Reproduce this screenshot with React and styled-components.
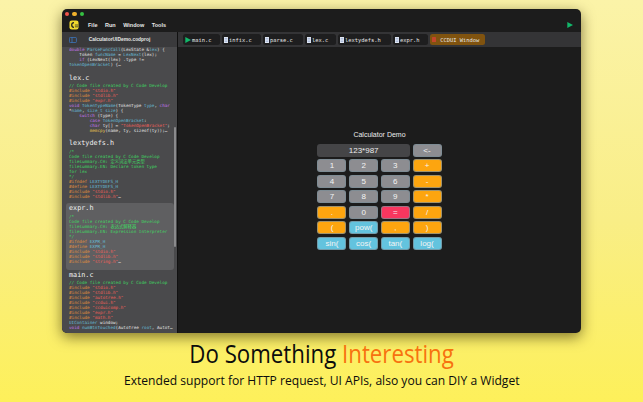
import React from "react";
import styled, { createGlobalStyle } from "styled-components";

const Global = createGlobalStyle`
  html, body { margin: 0; padding: 0; }
  body { width: 643px; height: 402px; overflow: hidden; font-family: "Liberation Sans", sans-serif; }
`;

const Page = styled.div`
  width: 643px;
  height: 402px;
  box-sizing: border-box;
  padding: 9px 62px 0;
  background: linear-gradient(180deg, #fbf3a8 0%, #f9ee86 55%, #fdf05a 100%);
  display: flex;
  flex-direction: column;
  align-items: center;
`;

const Window = styled.div`
  width: 519px;
  height: 324px;
  flex: none;
  background: #1c1c1c;
  border-radius: 5px;
  overflow: hidden;
  display: flex;
  flex-direction: column;
  box-shadow: 0 4px 14px rgba(50, 40, 0, 0.6);
`;

const TitleBar = styled.div`
  height: 23px;
  flex: none;
  box-sizing: border-box;
  display: flex;
  align-items: center;
  padding: 9px 8px 0 7px;
  position: relative;
  color: #e8e8e8;
  font-size: 5.5px;
  font-weight: bold;
`;

const Lights = styled.div`
  position: absolute;
  left: 3px;
  top: 3px;
  display: flex;
  gap: 3.2px;
`;

const Light = styled.span`
  width: 4.2px;
  height: 4.2px;
  border-radius: 50%;
  background: ${(p) => p.$color};
`;

const Menu = styled.div`
  display: flex;
  gap: 7.5px;
  margin-left: 9px;
  flex: 1;
`;

const Body = styled.div`
  flex: 1;
  display: flex;
  min-height: 0;
`;

const Sidebar = styled.div`
  width: 116px;
  flex: none;
  background: #4a4a4c;
  display: flex;
  flex-direction: column;
  position: relative;
  border-right: 1px solid #111;
  box-sizing: border-box;
  overflow: hidden;
`;

const SidebarHead = styled.div`
  height: 15px;
  flex: none;
  background: #3a3a3c;
  display: flex;
  align-items: center;
  justify-content: center;
  color: #e6e6e6;
  font-size: 4.9px;
  font-weight: bold;
  position: relative;
`;

const ToggleIcon = styled.svg`
  position: absolute;
  left: 7px;
  top: 5px;
`;

const Scrollbar = styled.div`
  position: absolute;
  right: 1px;
  top: 95px;
  width: 2px;
  height: 120px;
  border-radius: 1px;
  background: #8a8a8c;
`;

const Card = styled.div`
  flex: none;
  margin: ${(p) => (p.$selected ? "0 3px 0 4px" : "0")};
  padding: ${(p) => (p.$first ? 0 : 1)}px 3px ${(p) => p.$pb || 0}px ${(p) => (p.$selected ? 3 : 7)}px;
  background: ${(p) => (p.$selected ? "#5f5f61" : "transparent")};
  border-radius: 3px;
`;

const CardTitle = styled.div`
  font-family: "DejaVu Sans Mono", monospace;
  font-size: 6.8px;
  line-height: 9px;
  color: #f0f0f0;
  margin-bottom: 0.5px;
`;

const CodeLine = styled.div`
  font-family: "DejaVu Sans Mono", "Noto Sans CJK SC", monospace;
  font-size: 4.3px;
  line-height: 5px;
  height: 5px;
  white-space: pre;
  overflow: hidden;
  color: #e6e6e6;
`;

const Tok = styled.span`
  color: ${(p) =>
    ({
      c: "#3fd662",
      p: "#e08f3e",
      s: "#f0605a",
      k: "#c274ea",
      t: "#66bcd6",
      y: "#e6c64e",
    })[p.$k] || "#e6e6e6"};
`;

const Main = styled.div`
  flex: 1;
  display: flex;
  flex-direction: column;
  min-width: 0;
`;

const TabBar = styled.div`
  height: 15px;
  flex: none;
  background: #343436;
  display: flex;
  align-items: center;
  gap: 2px;
  padding-left: 5px;
`;

const Tab = styled.div`
  height: 11px;
  width: ${(p) => p.$w}px;
  box-sizing: border-box;
  border-radius: 2.5px;
  background: ${(p) => (p.$active ? "#80530f" : "#1e1e1f")};
  color: #e6e6e6;
  display: flex;
  align-items: center;
  gap: 1px;
  padding-left: 2px;
  font-family: "DejaVu Sans Mono", monospace;
  font-size: 5.4px;
  white-space: pre;
`;

const Stage = styled.div`
  flex: 1;
  display: flex;
  flex-direction: column;
  align-items: center;
  justify-content: center;
`;

const CalcTitle = styled.div`
  color: #ececec;
  font-size: 7px;
  height: 9px;
  line-height: 9px;
  margin-bottom: 4.5px;
`;

const Keys = styled.div`
  display: grid;
  grid-template-columns: repeat(4, 29px);
  grid-auto-rows: 13px;
  column-gap: 2.7px;
  row-gap: 2.5px;
`;

const Display = styled.div`
  grid-column: span 3;
  background: #454547;
  border-radius: 3px;
  color: #ececec;
  font-size: 8px;
  display: flex;
  align-items: center;
  justify-content: center;
`;

const KEY_COLORS = {
  num: "#8d8d91",
  op: "#fda50f",
  eq: "#f8365f",
  fn: "#63c3de",
};

const Key = styled.div`
  background: ${(p) => KEY_COLORS[p.$kind]};
  border: 0.5px solid rgba(120, 140, 150, 0.7);
  box-sizing: border-box;
  border-radius: 3px;
  color: #f4f4f4;
  font-size: 8px;
  display: flex;
  align-items: center;
  justify-content: center;
`;

const Caption = styled.div`
  text-align: center;
  white-space: nowrap;
  color: #0c0c0c;
  font-family: "Open Sans", sans-serif;
`;

const Headline = styled(Caption)`
  font-size: 25px;
  line-height: 30px;
  margin-top: 5px;
  transform: scaleX(0.89);
`;

const Accent = styled.span`
  color: #f7720f;
`;

const Subline = styled(Caption)`
  font-size: 13.5px;
  font-weight: 500;
  line-height: 16px;
  margin-top: 4px;
  transform: scaleX(0.896);
`;

const Logo = () => (
  <svg width="10" height="10" viewBox="0 0 11 11" style={{ flex: "none" }}>
    <rect x="0.5" y="0.5" width="10" height="10" rx="2.5" fill="#f1d92e" />
    <path d="M5.5 3 A2.5 2.5 0 1 0 5.5 8" fill="none" stroke="#222" strokeWidth="1.4" />
    <path d="M6.5 5.5 H10" stroke="#222" strokeWidth="0.8" />
    <path d="M6.5 7.5 H10" stroke="#222" strokeWidth="0.8" />
  </svg>
);

const PlayIcon = ({ size = 6, color = "#12b76a" }) => (
  <svg width={size} height={size} viewBox="0 0 6 6" style={{ flex: "none" }}>
    <path d="M0.3 0 L6 3 L0.3 6 Z" fill={color} />
  </svg>
);

const FileIcon = () => (
  <svg width="4" height="6" viewBox="0 0 4 6" style={{ flex: "none" }}>
    <rect width="4" height="6" fill="#dfe6f2" />
    <path d="M0.7 1.5H3.3M0.7 3H3.3M0.7 4.5H3.3" stroke="#7d95c4" strokeWidth="0.5" />
  </svg>
);

const WindowIcon = () => (
  <svg width="4" height="5" viewBox="0 0 4 5" style={{ flex: "none" }}>
    <rect width="4" height="5" rx="0.6" fill="#c2452a" />
  </svg>
);

const Code = ({ lines }) =>
  lines.map((line, i) => (
    <CodeLine key={i}>
      {line.map(([k, text], j) => (
        <Tok key={j} $k={k}>
          {text}
        </Tok>
      ))}
    </CodeLine>
  ));

const inc = (name) => [["p", "#include "], ["s", `"${name}"`]];

const snippets = [
  {
    first: true,
    lines: [
      [["k", "double "], ["t", "ParseFuncCall"], ["", "(LexState &"], ["t", "lex"], ["", ") {"]],
      [["", "    Token "], ["t", "funcName"], ["", " = "], ["t", "LexNext"], ["", "(lex);"]],
      [["k", "    if "], ["", "(LexNext(lex) .type != "]],
      [["t", "TokenOpenBracket"], ["", ") {\u2026"]],
    ],
    pb: 5.5,
  },
  {
    title: "lex.c",
    lines: [
      [["c", "// Code file created by C Code Develop"]],
      inc("stdio.h"),
      inc("stdlib.h"),
      inc("expr.h"),
      [["k", "void "], ["t", "TokenTypeName"], ["", "(TokenType "], ["t", "type"], ["", ", "], ["k", "char"]],
      [["", "*"], ["t", "name"], ["", ", "], ["t", "size_t size"], ["", ") {"]],
      [["k", "    switch "], ["", "(type) {"]],
      [["k", "        case "], ["t", "TokenOpenBracket"], ["", ":"]],
      [["k", "        char "], ["", "ty[] = "], ["s", '"TokenOpenBracket"'], ["", ";"]],
      [["y", "        memcpy"], ["", "(name, ty, sizeof(ty));\u2026"]],
    ],
    pb: 5,
  },
  {
    title: "lextydefs.h",
    lines: [
      [["c", "/*"]],
      [["c", "Code file created by C Code Develop"]],
      [["c", "filesummary.CH: \u5b9a\u4e49\u8bcd\u6cd5\u5355\u5143\u7c7b\u578b"]],
      [["c", "filesummary.EN: Declare token type"]],
      [["c", "for lex"]],
      [["c", "*/"]],
      [["p", "#ifndef "], ["t", "LEXTYDEFS_H"]],
      [["p", "#define "], ["t", "LEXTYDEFS_H"]],
      inc("stdio.h"),
      [["p", "#include "], ["s", '"stdlib.h"'], ["", "\u2026"]],
    ],
    pb: 4.5,
  },
  {
    title: "expr.h",
    selected: true,
    lines: [
      [["c", "/*"]],
      [["c", "Code file created by C Code Develop"]],
      [["c", "filesummary.CH: \u8868\u8fbe\u5f0f\u89e3\u91ca\u5668"]],
      [["c", "filesummary.EN: Expression Interpreter"]],
      [["c", "*/"]],
      [["p", "#ifndef "], ["t", "EXPR_H"]],
      [["p", "#define "], ["t", "EXPR_H"]],
      inc("stdio.h"),
      inc("stdlib.h"),
      [["p", "#include "], ["s", '"string.h"'], ["", "\u2026"]],
    ],
    pb: 6,
  },
  {
    title: "main.c",
    lines: [
      [["c", "// Code file created by C Code Develop"]],
      inc("stdio.h"),
      inc("stdlib.h"),
      inc("autotree.h"),
      inc("ccdui.h"),
      inc("ccduicomp.h"),
      inc("expr.h"),
      inc("math.h"),
      [["t", "UIContainer "], ["", "window;"]],
      [["k", "void "], ["t", "numBtnTouched"], ["", "(AutoTree "], ["t", "root"], ["", ", AutoT\u2026"]],
    ],
  },
];

const tabs = [
  { name: "main.c", w: 37, icon: <PlayIcon /> },
  { name: "infix.c", w: 39, icon: <FileIcon /> },
  { name: "parse.c", w: 40, icon: <FileIcon /> },
  { name: "lex.c", w: 31, icon: <FileIcon /> },
  { name: "lextydefs.h", w: 53, icon: <FileIcon /> },
  { name: "expr.h", w: 35, icon: <FileIcon /> },
  { name: " CCDUI Window", w: 55, icon: <WindowIcon />, active: true },
];

const keys = [
  ["1", "num"], ["2", "num"], ["3", "num"], ["+", "op"],
  ["4", "num"], ["5", "num"], ["6", "num"], ["-", "op"],
  ["7", "num"], ["8", "num"], ["9", "num"], ["*", "op"],
  [".", "op"], ["0", "num"], ["=", "eq"], ["/", "op"],
  ["(", "op"], ["pow(", "fn"], [",", "op"], [")", "op"],
  ["sin(", "fn"], ["cos(", "fn"], ["tan(", "fn"], ["log(", "fn"],
];

const App = () => (
  <Page>
    <Global />
    <Window>
      <TitleBar>
        <Lights>
          <Light $color="#f2554c" />
          <Light $color="#f0b12c" />
          <Light $color="#36c143" />
        </Lights>
        <Logo />
        <Menu>
          <span>File</span>
          <span>Run</span>
          <span>Window</span>
          <span>Tools</span>
        </Menu>
        <PlayIcon />
      </TitleBar>
      <Body>
        <Sidebar>
          <SidebarHead>
            <ToggleIcon width="8" height="6" viewBox="0 0 8 6">
              <rect x="0.4" y="0.4" width="7" height="5.2" rx="1" fill="none" stroke="#3d83d6" strokeWidth="0.7" />
              <path d="M3 0.4V5.6" stroke="#3d83d6" strokeWidth="0.7" />
            </ToggleIcon>
            CalculatorUIDemo.codproj
          </SidebarHead>
          {snippets.map((s, i) => (
            <Card key={i} $first={s.first} $selected={s.selected} $pb={s.pb}>
              {s.title && <CardTitle>{s.title}</CardTitle>}
              <Code lines={s.lines} />
            </Card>
          ))}
          <Scrollbar />
        </Sidebar>
        <Main>
          <TabBar>
            {tabs.map((t) => (
              <Tab key={t.name} $w={t.w} $active={t.active}>
                {t.icon}
                {t.name}
              </Tab>
            ))}
          </TabBar>
          <Stage>
            <CalcTitle>Calculator Demo</CalcTitle>
            <Keys>
              <Display>123*987</Display>
              <Key $kind="num">&lt;-</Key>
              {keys.map(([label, kind]) => (
                <Key key={label} $kind={kind}>
                  {label}
                </Key>
              ))}
            </Keys>
          </Stage>
        </Main>
      </Body>
    </Window>
    <Headline>
      Do Something <Accent>Interesting</Accent>
    </Headline>
    <Subline>Extended support for HTTP request, UI APIs, also you can DIY a Widget</Subline>
  </Page>
);

export default App;
